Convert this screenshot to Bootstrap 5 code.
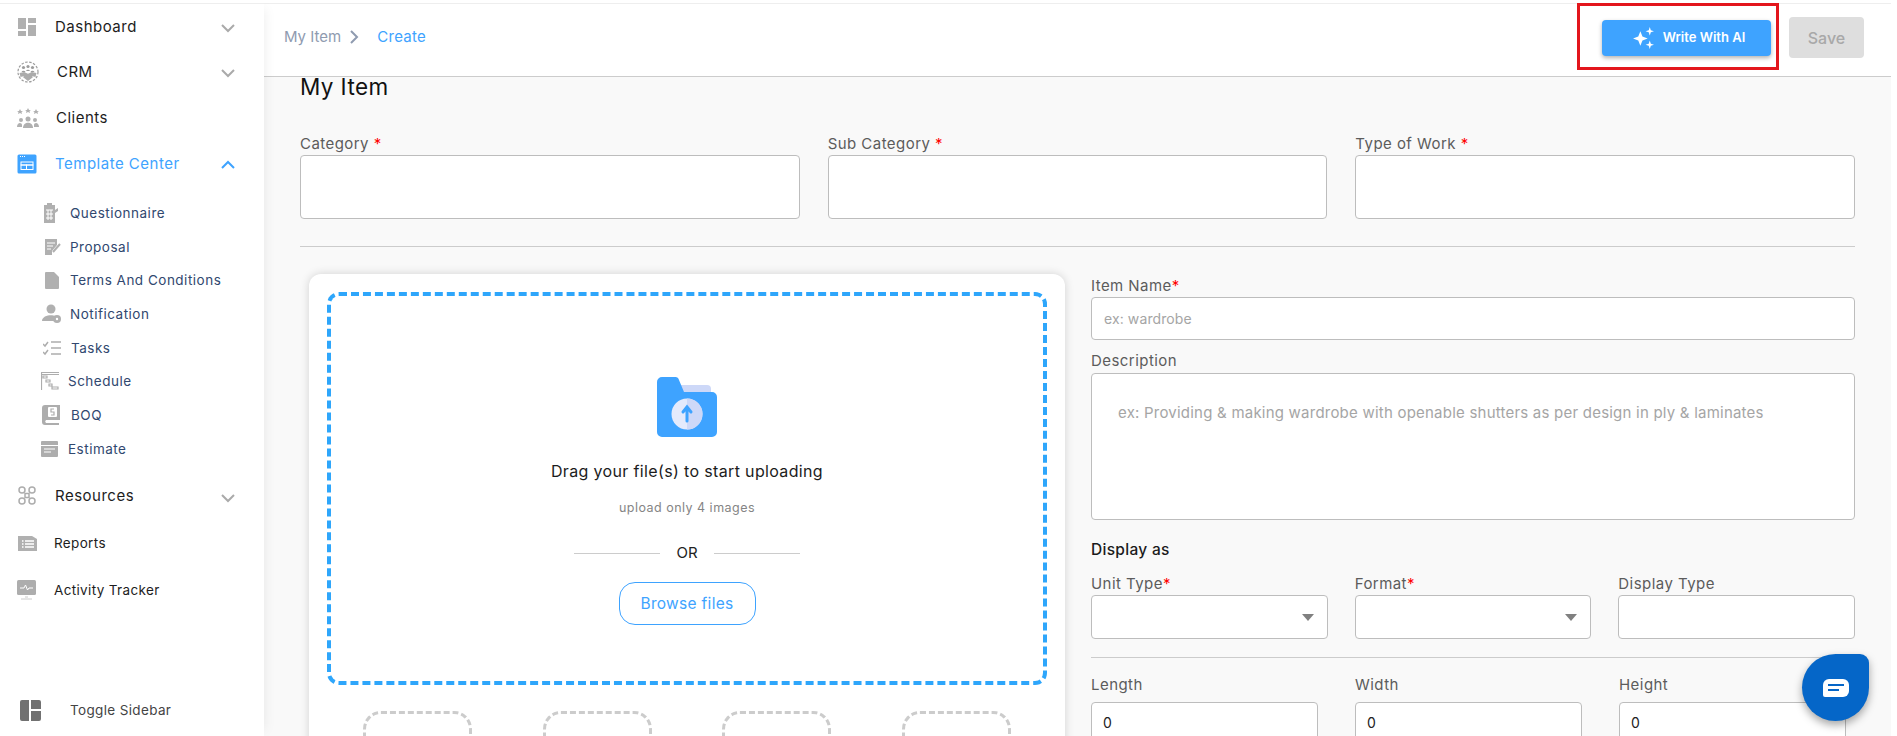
<!doctype html>
<html lang="en"><head><meta charset="utf-8"><title>Create</title>
<link href="https://cdn.jsdelivr.net/npm/bootstrap@5.3.0/dist/css/bootstrap.min.css" rel="stylesheet">
<style>
html,body{height:736px;overflow:hidden}
body{font-family:Inter,"Noto Sans",sans-serif;background:#fff;color:#212121}
.shell{height:736px;border-top:3px solid #fff;overflow:hidden}
.side{width:264px;background:#fff;height:733px;position:relative;flex:none;z-index:1;box-shadow:inset 0 1px #eee,6px 0 12px -6px rgba(0,0,0,.08)}
.mi{position:absolute;left:0;right:0;display:flex;align-items:center;font-size:15px;letter-spacing:.5px;color:#1d1d1d;height:24px}
.mi.sm{font-size:13.5px;letter-spacing:.35px}
.mi svg.ic{flex:none}
.mi .ch{position:absolute;left:221px;top:9px}
.mi .ch.up{top:8px}
.mi.act{color:#3ea3ff}
.mi.sub{color:#31486f;font-size:13.5px;letter-spacing:.5px}
.main{flex:none;width:1627px;height:733px;background:#f9f9f9;overflow:hidden}
.hdr{height:74px;background:#fff;border-bottom:1px solid #ccc;padding:0 0 0 20px;box-shadow:inset 0 1px #eee}
.crumb{font-size:15px;color:#8f9bb0;margin-top:23px}
.crumb b{font-weight:400;color:#3ea3ff;letter-spacing:.3px;margin-left:10px}
.aibtn{width:169px;height:36px;background:#3ea3ff;color:#fff;border:0;border-radius:4px;font-size:13px;font-weight:600;box-shadow:0 2px 4px rgba(0,0,0,.3);padding:0 0 0 4px}
.redbox{border:3px solid #e3161c;padding:14px 0 0 22px;width:202px;height:67px}
.savebtn{width:75px;height:41px;background:#dedede;color:#a8a8a8;border:0;border-radius:4px;font-size:16px;font-weight:500;margin:14px 27px 0 10px}
.pad{padding:0 0 0 36px}
.ttl{font-size:22.5px;letter-spacing:.4px;font-weight:400;color:#111;margin:0;line-height:24px}
.lbl{font-size:15px;letter-spacing:.45px;color:#5c5c5c;line-height:20px;margin:0 0 1px;display:block}
.lbl i{font-style:normal;color:#f00}
.box{display:block;background:#fff;border:1px solid #bdbdbd;border-radius:4px;width:100%}
.rule{border-top:1px solid #ccc}
.cardx{width:756px;height:500px;background:#fff;border-radius:12px;box-shadow:0 0 10px rgba(0,0,0,.16);margin-left:9px;padding:18px;flex:none}
.dropz{height:393px;border:4px dashed #2ea6fb;border-radius:12px;text-align:center}
.dragt{font-size:16px;letter-spacing:.35px;color:#1c1c1c;line-height:24px;margin-top:22px}
.upl{font-size:12.5px;letter-spacing:.48px;color:#858585;margin-top:15px;line-height:20px}
.orln{width:226px;color:#222;font-size:15px;margin-top:23px;line-height:24px}
.orln span{flex:1;border-top:1px solid #ccc}
.brw{width:137px;height:43px;border:1px solid #3ea3ff;border-radius:16px;color:#3ea3ff;font-size:15.5px;letter-spacing:.3px;background:#fff;margin-top:17px;padding:0}
.thumbs{padding:26px 36px 0}
.tb{width:109px;height:80px;border:3px dashed #ccc;border-radius:18px}
.fld{height:43px}
.ph{color:#a5a5a5;font-size:14px;letter-spacing:.1px;padding-left:12px}
.ta{height:147px;padding:29px 26px;color:#a5a5a5;font-size:15px;letter-spacing:.22px;line-height:20px}
.sect{font-size:15.5px;letter-spacing:.3px;color:#1b1b1b;font-weight:500;line-height:22px}
.sel{height:44px;position:relative}
.sel::after{content:"";position:absolute;right:13px;top:18px;border:6px solid transparent;border-top:7px solid #808080;border-bottom:0}
.num{height:44px;padding:9px 11px;font-size:14px;color:#222}
.lbl.gapb{margin-bottom:7px}
.fab{position:absolute;left:1802px;top:654px;width:67px;height:67px;background:#0566c8;border-radius:50% 9px 50% 50%;box-shadow:0 4px 8px rgba(0,0,0,.35);display:flex;align-items:center;justify-content:center}
</style></head><body>
<div class="shell d-flex">
<nav class="side">
 <div class="mi" style="top:12px"><svg class="ic" width="20" height="20" viewBox="0 0 20 20" style="margin-left:17px"><path fill="#b0b0b0" d="M1 1h8v11H1zM11 1h8v5h-8zM11 8h8v11h-8zM1 14h8v5H1z"/></svg><span style="margin-left:18px">Dashboard</span><svg class="ch" width="14" height="9" viewBox="0 0 14 9"><path d="M1 1l6 6 6-6" fill="none" stroke="#aaa" stroke-width="2"/></svg></div>
 <div class="mi" style="top:57px"><svg class="ic" width="22" height="24" viewBox="0 0 22 24" style="margin-left:17px"><g fill="none" stroke="#9c9c9c"><circle cx="11" cy="12" r="10" stroke-width="1.200" stroke-dasharray="2.500 1.500"/><path stroke="#ababab" stroke-width="4" d="M3 15l4-1 4 2 4-2 4 1"/><path stroke="#ababab" stroke-width="3" d="M7 16l4 3 4-3"/></g><g fill="#9c9c9c"><circle cx="6.500" cy="7.500" r="1.600"/><circle cx="11" cy="6.500" r="1.600"/><circle cx="15.500" cy="7.500" r="1.600"/><path d="M4.500 12a2.200 2.200 0 0 1 4 0zM9 11a2.200 2.200 0 0 1 4 0zM13.500 12a2.200 2.200 0 0 1 4 0z"/></g></svg><span style="margin-left:18px">CRM</span><svg class="ch" width="14" height="9" viewBox="0 0 14 9"><path d="M1 1l6 6 6-6" fill="none" stroke="#aaa" stroke-width="2"/></svg></div>
 <div class="mi" style="top:103px"><svg class="ic" width="22" height="22" viewBox="0 0 22 22" style="margin-left:17px"><g fill="#b0b0b0"><path d="M3 2l1 2h2l-1.500 1 .5 2-2-1-2 1 .5-2L0 4h2zM11 1l1 2h2l-1.500 1 .5 2-2-1-2 1 .5-2L8 3h2zM19 2l1 2h2l-1.500 1 .5 2-2-1-2 1 .5-2L16 4h2z"/><circle cx="11" cy="12" r="2.500"/><path d="M6 21c0-7 10-7 10 0z"/><circle cx="4" cy="13" r="2"/><circle cx="18" cy="13" r="2"/><path d="M0 20c0-5 5-5 5-2v2zM22 20c0-5-5-5-5-2v2z"/></g></svg><span style="margin-left:17px">Clients</span></div>
 <div class="mi act" style="top:149px"><svg class="ic" width="20" height="20" viewBox="0 0 20 20" style="margin-left:17px"><rect x="0.500" y="0.500" width="19" height="19" rx="1.500" fill="#3ea3ff"/><path fill="#fff" d="M3 2h1v1H3zM5 2h1v1H5zM7 2h1v1H7z"/><g fill="none" stroke="#fff"><rect x="4" y="8" width="12" height="3"/><rect x="4" y="11" width="5.500" height="4.500"/><rect x="9.500" y="11" width="6.500" height="4.500"/></g></svg><span style="margin-left:18px">Template Center</span><svg class="ch up" width="14" height="9" viewBox="0 0 14 9"><path d="M1 8l6-6 6 6" fill="none" stroke="#3ea3ff" stroke-width="2"/></svg></div>
 <div class="mi sub" style="top:198px"><svg class="ic" width="16" height="20" viewBox="0 0 16 20" style="margin-left:43px"><path fill="#b0b0b0" d="M1 2h3V0h5v2h3v5l3-2v3l-3 2v10H1z"/><path stroke="#fff" d="M3 7h7M3 11h7M3 15h7M5 7v10M8 7v10"/></svg><span style="margin-left:11px">Questionnaire</span></div>
 <div class="mi sub" style="top:232px"><svg class="ic" width="16" height="18" viewBox="0 0 16 18" style="margin-left:45px"><path fill="#b0b0b0" d="M0 1h12v6L7 13v4H0z"/><path stroke="#fff" d="M2 5h8M2 8h6M2 11h4"/><path stroke="#b0b0b0" stroke-width="2" d="M8 14l7-8"/></svg><span style="margin-left:9px">Proposal</span></div>
 <div class="mi sub" style="top:265px"><svg class="ic" width="14" height="17" viewBox="0 0 14 17" style="margin-left:45px"><path fill="#b0b0b0" d="M1 0h8l5 5v11a1 1 0 0 1-1 1H1a1 1 0 0 1-1-1V1a1 1 0 0 1 1-1z"/></svg><span style="margin-left:11px">Terms And Conditions</span></div>
 <div class="mi sub" style="top:299px"><svg class="ic" width="19" height="20" viewBox="0 0 19 20" style="margin-left:42px"><g fill="#b0b0b0"><circle cx="9" cy="5" r="4.500"/><path d="M0 17c0-7 15-7 15-3v3z"/><circle cx="15" cy="15" r="4"/></g><circle cx="15" cy="15" r="1.200" fill="#fff"/></svg><span style="margin-left:9px">Notification</span></div>
 <div class="mi sub" style="top:333px"><svg class="ic" width="18" height="15" viewBox="0 0 18 15" style="margin-left:43px"><path fill="none" stroke="#adadad" stroke-width="1.500" d="M0 3l2 2 3-4M0 11l2 2 3-4M8 1h10M8 7h10M8 13h10"/></svg><span style="margin-left:10px">Tasks</span></div>
 <div class="mi sub" style="top:366px"><svg class="ic" width="18" height="18" viewBox="0 0 18 18" style="margin-left:41px"><path fill="none" stroke="#adadad" stroke-width="1.200" d="M.5 18V.5H18M.5 2.500H18M2 4h4v2H2zM5 8h4v2H5zM8 12h3v2H8zM11 15h6v2h-6z"/></svg><span style="margin-left:9px">Schedule</span></div>
 <div class="mi sub" style="top:400px"><svg class="ic" width="18" height="20" viewBox="0 0 18 20" style="margin-left:42px"><path fill="#adadad" d="M3 0h15v15H4a2 2 0 0 0 0 3h13v2H3a3 3 0 0 1-3-3V3a3 3 0 0 1 3-3z"/><rect x="6" y="2" width="9" height="10" rx="1" fill="#fff"/><path d="M12 4H9v3h3v3H9" fill="none" stroke="#adadad" stroke-width="1.200"/></svg><span style="margin-left:11px">BOQ</span></div>
 <div class="mi sub" style="top:434px"><svg class="ic" width="17" height="16" viewBox="0 0 17 16" style="margin-left:41px"><path fill="#adadad" d="M0 1a1 1 0 0 1 1-1h15a1 1 0 0 1 1 1v3H0zM0 5h17v10a1 1 0 0 1-1 1H1a1 1 0 0 1-1-1z"/><path stroke="#fff" d="M3 8h11M3 11h7"/></svg><span style="margin-left:10px">Estimate</span></div>
 <div class="mi" style="top:481px"><svg class="ic" width="20" height="20" viewBox="0 0 20 20" style="margin-left:18px"><g fill="none" stroke="#adadad" stroke-width="1.500"><circle cx="4" cy="4" r="3"/><circle cx="14" cy="4" r="3"/><circle cx="4" cy="15" r="3"/><circle cx="14" cy="15" r="3"/><rect x="7" y="7.500" width="4" height="4"/></g></svg><span style="margin-left:17px">Resources</span><svg class="ch" style="top:10px" width="14" height="9" viewBox="0 0 14 9"><path d="M1 1l6 6 6-6" fill="none" stroke="#aaa" stroke-width="2"/></svg></div>
 <div class="mi sm" style="top:528px"><svg class="ic" width="19" height="16" viewBox="0 0 19 16" style="margin-left:18px"><path fill="#b0b0b0" d="M0 1h14l5 3v12H0z"/><path stroke="#fff" stroke-width="1.500" d="M4 6h1.500M7 6h9M4 9h1.500M7 9h9M4 12h1.500M7 12h9"/></svg><span style="margin-left:17px">Reports</span></div>
 <div class="mi sm" style="top:575px"><svg class="ic" width="20" height="20" viewBox="0 0 20 20" style="margin-left:17px"><rect width="19" height="15" rx="1.500" fill="#adadad"/><path fill="none" stroke="#fff" d="M3 8h4l1.500-3 2 5 1.500-2h4"/><path stroke="#ccc" d="M4 19h11M8 17h3"/></svg><span style="margin-left:17px">Activity Tracker</span></div>
 <div class="mi sm" style="top:695px;color:#444"><svg class="ic" width="21" height="21" viewBox="0 0 21 21" style="margin-left:20px"><path fill="#717171" d="M2 0h7v21H2a2 2 0 0 1-2-2V2a2 2 0 0 1 2-2zM11 0h8a2 2 0 0 1 2 2v7H11zM11 11h10v8a2 2 0 0 1-2 2h-8z"/></svg><span style="margin-left:29px">Toggle Sidebar</span></div>
</nav>
<main class="main">
 <header class="hdr d-flex align-items-start">
  <div class="crumb d-flex align-items-center"><span>My Item</span><svg width="10" height="14" viewBox="0 0 10 14" class="mx-2"><path d="M2 1l6 6-6 6" fill="none" stroke="#8f9bb0" stroke-width="2"/></svg><b>Create</b></div>
  <div class="ms-auto d-flex align-items-start">
   <div class="redbox"><button class="aibtn d-flex align-items-center justify-content-center"><svg width="23" height="22" viewBox="0 0 22 21" class="me-2"><path fill="#fff" d="M8 4l2 5 5 2-5 2-2 5-2-5-5-2 5-2zM17 0l1 3 3 1-3 1-1 3-1-3-3-1 3-1zM17 13l1 3 3 1-3 1-1 3-1-3-3-1 3-1z"/></svg>Write With AI</button></div>
   <button class="savebtn">Save</button>
  </div>
 </header>
 <div class="pad">
  <h1 class="ttl" style="margin-top:-2px">My Item</h1>
  <div class="d-flex" style="gap:28px;margin-top:35px;width:1555px">
   <div class="flex-fill" style="width:500px"><label class="lbl">Category <i>*</i></label><div class="box" style="height:64px"></div></div>
   <div class="flex-fill" style="width:500px"><label class="lbl">Sub Category <i>*</i></label><div class="box" style="height:64px"></div></div>
   <div class="flex-fill" style="width:500px"><label class="lbl">Type of Work <i>*</i></label><div class="box" style="height:64px"></div></div>
  </div>
  <div class="rule" style="width:1555px;margin-top:27px"></div>
  <div class="d-flex" style="margin-top:27px">
   <section class="cardx">
    <div class="dropz">
     <svg width="60" height="60" viewBox="0 0 60 60" style="margin-top:81px"><path fill="#cdd8f8" d="M20 8h30a4 4 0 0 1 4 4v10H20z"/><path fill="#3ea3ff" d="M5 0h13a4 4 0 0 1 4 3l5 12h28a5 5 0 0 1 5 5v35a5 5 0 0 1-5 5H5a5 5 0 0 1-5-5V5a5 5 0 0 1 5-5z"/><ellipse cx="30" cy="37" rx="15.500" ry="15.500" fill="#e4eafc"/><path fill="#cdd8f8" d="M30 21.500a15.500 15.500 0 0 1 0 31z"/><path fill="none" stroke="#3ea3ff" stroke-width="3" stroke-linecap="round" d="M30 44V31M26 35l4-5 4 5"/></svg>
     <div class="dragt">Drag your file(s) to start uploading</div>
     <div class="upl">upload only 4 images</div>
     <div class="orln d-flex align-items-center gap-3 mx-auto"><span></span>OR<span></span></div>
     <button class="brw">Browse files</button>
    </div>
    <div class="thumbs d-flex justify-content-between"><div class="tb"></div><div class="tb"></div><div class="tb"></div><div class="tb"></div></div>
   </section>
   <section style="width:764px;margin-left:26px">
    <label class="lbl" style="margin-top:2px">Item Name<i>*</i></label>
    <div class="box fld ph d-flex align-items-center">ex: wardrobe</div>
    <label class="lbl" style="margin-top:11px;margin-bottom:2px">Description</label>
    <div class="box ta">ex: Providing &amp; making wardrobe with openable shutters as per design in ply &amp; laminates</div>
    <div class="sect" style="margin-top:19px">Display as</div>
    <div class="d-flex" style="gap:27px;margin-top:13px">
     <div class="flex-fill" style="width:200px"><label class="lbl">Unit Type<i>*</i></label><div class="box sel"></div></div>
     <div class="flex-fill" style="width:200px"><label class="lbl">Format<i>*</i></label><div class="box sel"></div></div>
     <div class="flex-fill" style="width:200px"><label class="lbl">Display Type</label><div class="box" style="height:44px"></div></div>
    </div>
    <div class="rule" style="margin-top:18px"></div>
    <div class="d-flex" style="margin-top:17px">
     <div style="width:264px"><label class="lbl gapb">Length</label><div class="box num" style="width:227px">0</div></div>
     <div style="width:264px"><label class="lbl gapb">Width</label><div class="box num" style="width:227px">0</div></div>
     <div style="width:227px"><label class="lbl gapb">Height</label><div class="box num">0</div></div>
    </div>
   </section>
  </div>
 </div>
</main>
</div>
<div class="fab"><svg width="26" height="18" viewBox="0 0 26 18"><path fill="#fff" d="M6 0h14a6 6 0 0 1 6 6v6a6 6 0 0 1-6 6H2a2 2 0 0 1-2-2V6a6 6 0 0 1 6-6z"/><path fill="#0566c8" d="M5 5h16v2H5zM5 10h11v2H5z"/></svg></div>
<script src="https://cdn.jsdelivr.net/npm/bootstrap@5.3.0/dist/js/bootstrap.bundle.min.js"></script>
</body></html>
